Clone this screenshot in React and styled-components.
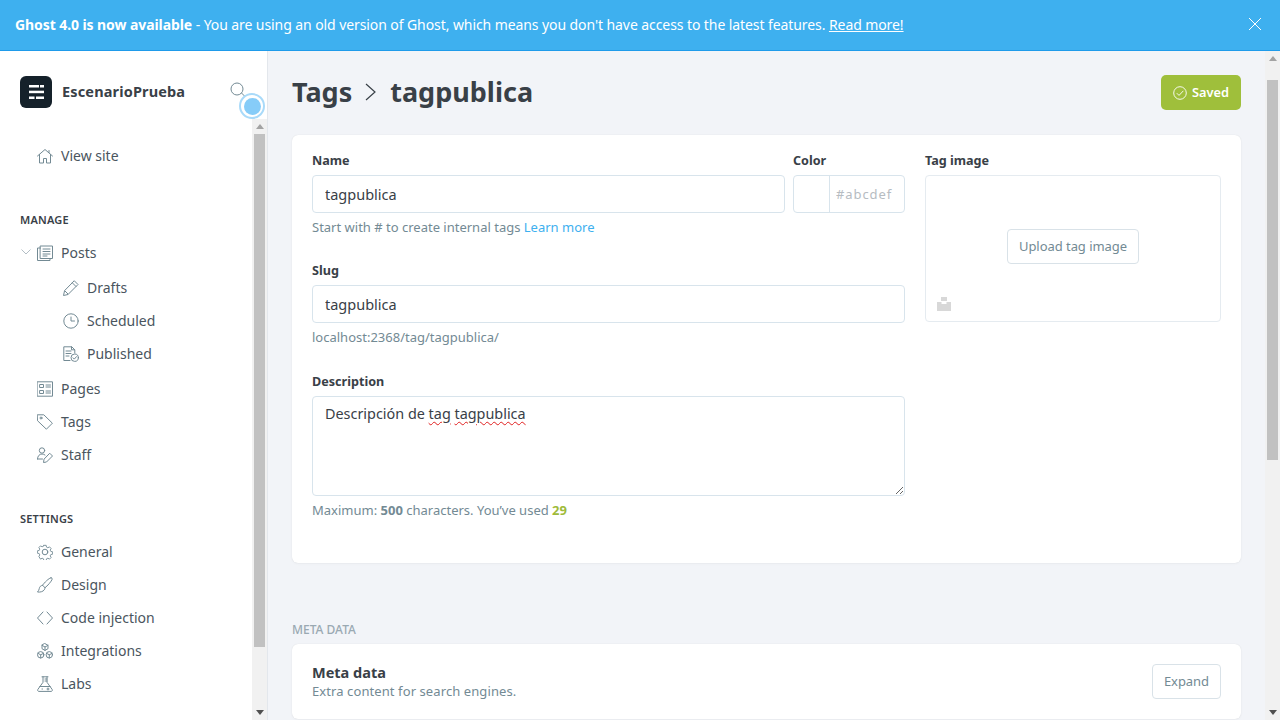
import React from 'react';
import styled, { createGlobalStyle } from 'styled-components';

const GlobalStyle = createGlobalStyle`
  html, body {
    margin: 0;
    height: 100%;
    overflow: hidden;
    font-family: "Noto Sans", "Open Sans", sans-serif;
    color: #394047;
  }
  * { box-sizing: border-box; }
`;

const Page = styled.div`
  width: 1280px;
  height: 720px;
  display: flex;
  flex-direction: column;
  background: #f2f4f8;
  overflow: hidden;
`;

const Banner = styled.div`
  height: 51px;
  flex: none;
  display: flex;
  align-items: center;
  justify-content: space-between;
  padding: 0 18px 2px 15px;
  background: #3eb0ef;
  border-bottom: 1px solid #1f9bea;
  color: #fff;
  font-size: 14px;
  letter-spacing: -0.083px;

  b { font-weight: 700; }
  a { color: #fff; text-decoration: underline; }
`;

const Body = styled.div`
  flex: 1;
  display: flex;
  min-height: 0;
`;

const Sidebar = styled.aside`
  width: 268px;
  flex: none;
  display: flex;
  flex-direction: column;
  background: #fff;
  border-right: 1px solid #e3e7ec;
`;

const SideHead = styled.div`
  position: relative;
  height: 68px;
  flex: none;
  display: flex;
  align-items: center;
  gap: 10px;
  padding: 13px 20px 0;
`;

const Logo = styled.div`
  width: 32px;
  height: 32px;
  border-radius: 6px;
  background: #15212a;
  color: #fff;
  display: flex;
  align-items: center;
  justify-content: center;
`;

const BlogName = styled.div`
  padding-bottom: 2px;
  font-size: 14.5px;
  font-weight: 700;
  color: #394047;
  letter-spacing: 0.15px;
`;

const SearchIcon = styled.svg`
  position: absolute;
  left: 228px;
  top: 30px;
`;

const Hotspot = styled.div`
  position: absolute;
  left: 239px;
  top: 42px;
  width: 26px;
  height: 26px;
  border-radius: 50%;
  border: 2px solid #a9daf9;
  display: flex;
  align-items: center;
  justify-content: center;
  background: #fff;

  &::after {
    content: '';
    width: 17px;
    height: 17px;
    border-radius: 50%;
    background: #86ccf8;
  }
`;

const SideBody = styled.div`
  flex: 1;
  min-height: 0;
  display: flex;
`;

const Nav = styled.nav`
  flex: 1;
  overflow: hidden;
  padding-top: 20px;
`;

const SectionLabel = styled.div`
  height: 16px;
  line-height: 18px;
  margin: 39px 0 9px 20px;
  font-size: 11px;
  font-weight: 600;
  letter-spacing: 0.2px;
  color: #394047;
  text-transform: uppercase;
`;

const NavRow = styled.div`
  position: relative;
  height: 33px;
  display: flex;
  align-items: center;
  gap: 8px;
  padding-left: ${({ $sub }) => ($sub ? '63px' : '37px')};
  font-size: 14px;
  color: #4a555e;

  svg { flex: none; }
`;

const Chevron = styled.svg`
  position: absolute;
  left: 21px;
  top: 12px;
`;

const SubList = styled.div`
  margin: 2px 0;
`;

const Rail = styled.div`
  width: 15px;
  flex: none;
  display: flex;
  flex-direction: column;
  align-items: center;
  background: #f1f1f1;
`;

const RailArrow = styled.div`
  height: 15px;
  flex: none;
  display: flex;
  align-items: center;
  justify-content: center;

  &::after {
    content: '';
    border-left: 4px solid transparent;
    border-right: 4px solid transparent;
    ${({ $down }) => ($down ? 'border-top: 5px solid #505050;' : 'border-bottom: 5px solid #a3a3a3;')}
  }
`;

const RailTrack = styled.div`
  flex: 1;
  width: 100%;
  padding: 0 2px;
`;

const RailThumb = styled.div`
  height: ${({ $height }) => $height}px;
  margin-top: ${({ $offset }) => $offset}px;
  background: #c1c1c1;
`;

const Main = styled.main`
  flex: 1;
  min-width: 0;
  overflow: hidden;
  padding: 24px 24px 0;
`;

const Header = styled.header`
  height: 35px;
  display: flex;
  align-items: center;
  justify-content: space-between;
  margin-bottom: 25px;
`;

const Title = styled.h1`
  margin: 0;
  padding-bottom: 2px;
  display: flex;
  align-items: center;
  gap: 12px;
  font-size: 27px;
  font-weight: 700;
  color: #394047;
`;

const SavedButton = styled.button`
  width: 80px;
  height: 35px;
  display: flex;
  align-items: center;
  justify-content: center;
  gap: 5px;
  padding: 0 0 2px;
  border: 0;
  border-radius: 5px;
  background: #9fbf3b;
  color: #fff;
  font: 600 12.8px "Noto Sans", sans-serif;

  svg { margin-top: 2px; }
`;

const Card = styled.section`
  background: #fff;
  border-radius: 6px;
  box-shadow: 0 0 1px rgba(0, 0, 0, 0.12), 0 1px 3px rgba(0, 0, 0, 0.03);
`;

const TagCard = styled(Card)`
  height: 428px;
  padding: 17px 20px 0;
  display: grid;
  grid-template-columns: 593px 296px;
  column-gap: 20px;
  align-items: start;
`;

const NameRow = styled.div`
  display: grid;
  grid-template-columns: 473px 112px;
  column-gap: 8px;
`;

const Field = styled.div`
  margin-bottom: ${({ $gap }) => $gap ?? 28}px;
`;

const Label = styled.label`
  display: block;
  height: 16px;
  line-height: 18px;
  margin-bottom: 7px;
  font-size: 12.6px;
  font-weight: 700;
  color: #394047;
`;

const Input = styled.input`
  display: block;
  width: 100%;
  height: 38px;
  padding: 0 12px;
  border: 1px solid #d8e4ec;
  border-radius: 4px;
  background: #fff;
  outline: 0;
  font: 14.5px "Noto Sans", sans-serif;
  color: #394047;
`;

const ColorBox = styled.div`
  height: 38px;
  display: flex;
  border: 1px solid #d8e4ec;
  border-radius: 4px;
`;

const Swatch = styled.div`
  width: 36px;
  flex: none;
  border-right: 1px solid #d8e4ec;
`;

const ColorInput = styled.input`
  width: 74px;
  border: 0;
  outline: 0;
  background: transparent;
  padding: 0 0 0 6px;
  font: 13px "Noto Sans", sans-serif;
  letter-spacing: 0.9px;

  &::placeholder { color: #b6bcc2; opacity: 1; }
`;

const TextArea = styled.div`
  height: 100px;
  padding: 7px 12px;
  border: 1px solid #d8e4ec;
  border-radius: 4px;
  font-size: 14.4px;
  line-height: 20px;
  color: #394047;
  overflow: hidden;
  resize: vertical;
`;

const Misspelled = styled.span`
  text-decoration: underline wavy #e02020 1px;
  text-underline-offset: 2px;
`;

const Hint = styled.p`
  height: 14px;
  line-height: 14px;
  margin: 7px 0 0;
  font-size: 13px;
  color: #738a94;

  a { color: #3eb0ef; }
  b { font-weight: 700; }
  em { font-style: normal; font-weight: 700; color: #9fbb3a; }
`;

const ImageBox = styled.div`
  position: relative;
  height: 147px;
  display: flex;
  align-items: center;
  justify-content: center;
  padding-bottom: 4px;
  border: 1px solid #e5ebf0;
  border-radius: 4px;
`;

const PlainButton = styled.button`
  height: 35px;
  padding: 0 11px 2px;
  border: 1px solid #d9e2e8;
  border-radius: 4px;
  background: #fff;
  color: #738a94;
  font: 13px "Noto Sans", sans-serif;
  letter-spacing: -0.05px;
`;

const ImageMark = styled.svg`
  position: absolute;
  left: 11px;
  bottom: 10px;
`;

const SectionTitle = styled.div`
  height: 14px;
  line-height: 15px;
  margin: 59px 0 8px;
  font-size: 12px;
  font-weight: 500;
  color: #9aa9b2;
  text-transform: uppercase;
`;

const MetaCard = styled(Card)`
  height: 75px;
  display: flex;
  align-items: flex-start;
  justify-content: space-between;
  padding: 20px;
`;

const MetaTitle = styled.div`
  height: 18px;
  line-height: 16px;
  font-size: 14.5px;
  font-weight: 700;
  color: #394047;
`;

const MetaText = styled.div`
  margin-top: 1px;
  font-size: 13px;
  line-height: 17px;
  letter-spacing: 0.09px;
  color: #738a94;
`;

const Ico = ({ children, size = 16 }) => (
  <svg width={size} height={size} viewBox="0 0 16 16" fill="none" stroke="#738a94" strokeWidth="1" strokeLinecap="round" strokeLinejoin="round">
    {children}
  </svg>
);

const HomeIcon = () => (
  <Ico>
    <path d="M0.5 8 8 1.5 15.5 8M2.5 6.500V15h4v-4.500h3V15h4V6.500M12 2.500v2" />
  </Ico>
);
const PostsIcon = () => (
  <Ico>
    <path d="M3.500 1h12v12.500h-12zM3.500 3H.5v12.500H13v-2M6 4h7M6 6.500h7M6 9h7M6 11h4" />
  </Ico>
);
const PencilIcon = () => (
  <Ico>
    <path d="M11.500 1 15 4.500 5 14.500l-4.500 1 1-4.500zM9.500 3l3.500 3.500M2 11l3 3" />
  </Ico>
);
const ClockIcon = () => (
  <Ico>
    <circle cx="8" cy="8" r="7.200" />
    <path d="M8 4v4h3.500" />
  </Ico>
);
const PublishedIcon = () => (
  <Ico>
    <path d="M7 14.500H.8V.8h8l3 3V7M8.500.8v3h3M3 5h5M3 7.500h5M3 10h3" />
    <circle cx="11.700" cy="11.700" r="3.700" />
    <path d="m10 11.800 1.300 1.300 2.200-2.500" />
  </Ico>
);
const PagesIcon = () => (
  <Ico>
    <path d="M.5.8h15v14.400H.5zM3 3.500h3.500v3H3zM3 9.500h3.500v3H3zM9 4h4.500M9 6h4.500M9 10h4.500M9 12h4.500" />
  </Ico>
);
const TagIcon = () => (
  <Ico>
    <path d="M.6.8h6.200l8.600 8.400-6 6L.8 7z" />
    <circle cx="4" cy="4" r="1" />
  </Ico>
);
const StaffIcon = () => (
  <Ico>
    <circle cx="5" cy="3.500" r="2.700" />
    <path d="M.5 12c0-3 2-5 4.500-5 1.200 0 2.200.4 3 1M.5 12h5M13 6.500l2.500 2.500-6 6-3 .5.5-3z" />
  </Ico>
);
const GearIcon = () => (
  <Ico>
    <circle cx="8" cy="8" r="2.800" />
    <path d="M6.700.6h2.600l.4 2 1.500.7 1.800-1 1.800 1.800-1 1.800.7 1.500 2 .4v2.600l-2 .4-.7 1.500 1 1.800-1.800 1.800-1.800-1-1.500.7-.4 2H6.700l-.4-2-1.500-.7-1.800 1L1.200 13l1-1.800-.7-1.500-2-.4V6.700l2-.4.7-1.500-1-1.800L3 1.200l1.800 1 1.500-.7z" transform="translate(0.8 0.8) scale(0.9)" />
  </Ico>
);
const BrushIcon = () => (
  <Ico>
    <path d="M14 .8c.8 0 1.400.7 1.200 1.400-.6 2-5 7-7.200 8.500L5.600 8.300C7 6 12 .8 14 .8zM5.600 8.300c-2 .2-3 1.500-3.300 3.200-.2 1.300-.8 2.500-1.800 3.500 2.500.4 5.500-.3 6.800-2.200.5-.7.700-1.400.7-2.100" />
  </Ico>
);
const CodeIcon = () => (
  <Ico>
    <path d="M6 2 .5 8 6 14M10 2l5.500 6L10 14" />
  </Ico>
);
const IntegrationsIcon = () => (
  <Ico>
    <path d="M8 .6l3 1.700v3.400L8 7.400 5 5.700V2.300zM5 2.300l3 1.700 3-1.700M8 4v3.400" />
    <circle cx="3.700" cy="11.800" r="3.200" />
    <circle cx="12.300" cy="11.800" r="3.200" />
    <path d="M3.700 11.800v3.200M.9 10.300l2.800 1.500 2.800-1.500M12.300 11.800v3.200M9.500 10.300l2.800 1.500 2.800-1.500" />
  </Ico>
);
const LabsIcon = () => (
  <Ico>
    <path d="M5 .8h6M6 .8v5.500L.8 13.500c-.5 1 .1 1.900 1.200 1.900h12c1.100 0 1.700-.9 1.200-1.900L10 6.300V.8M8 3h2M8 5h2M2.800 10.500h10.400M5 13h.5M10 13h2M11 12v2" />
  </Ico>
);

const navTop = [
  { label: 'Drafts', Icon: PencilIcon },
  { label: 'Scheduled', Icon: ClockIcon },
  { label: 'Published', Icon: PublishedIcon },
];

const navManage = [
  { label: 'Pages', Icon: PagesIcon },
  { label: 'Tags', Icon: TagIcon },
  { label: 'Staff', Icon: StaffIcon },
];

const navSettings = [
  { label: 'General', Icon: GearIcon },
  { label: 'Design', Icon: BrushIcon },
  { label: 'Code injection', Icon: CodeIcon },
  { label: 'Integrations', Icon: IntegrationsIcon },
  { label: 'Labs', Icon: LabsIcon },
];

const Scrollbar = ({ offset, height }) => (
  <Rail>
    <RailArrow />
    <RailTrack>
      <RailThumb $offset={offset} $height={height} />
    </RailTrack>
    <RailArrow $down />
  </Rail>
);

const App = () => (
  <Page>
    <GlobalStyle />
    <Banner>
      <span>
        <b>Ghost 4.0 is now available</b> - You are using an old version of Ghost, which means you don't have access to the latest features. <a href="#more">Read more!</a>
      </span>
      <svg width="14" height="14" viewBox="0 0 14 14" stroke="#fff" strokeWidth="1">
        <path d="M1 1l12 12M13 1 1 13" />
      </svg>
    </Banner>
    <Body>
      <Sidebar>
        <SideHead>
          <Logo>
            <svg width="15" height="14" viewBox="0 0 15 14" fill="#fff">
              <rect x="0" y="0" width="10" height="2.500" />
              <rect x="11" y="0" width="4" height="2.500" />
              <rect x="0" y="5.700" width="15" height="2.500" />
              <rect x="0" y="11.500" width="5.500" height="2.500" />
              <rect x="7" y="11.500" width="8" height="2.500" />
            </svg>
          </Logo>
          <BlogName>EscenarioPrueba</BlogName>
          <SearchIcon width="20" height="20" viewBox="0 0 20 20" fill="none" stroke="#738a94" strokeWidth="1">
            <circle cx="9" cy="8" r="6" />
            <path d="m13.500 12 4 4" />
          </SearchIcon>
          <Hotspot />
        </SideHead>
        <SideBody>
          <Nav>
            <NavRow><HomeIcon />View site</NavRow>
            <SectionLabel>Manage</SectionLabel>
            <NavRow>
              <Chevron width="10" height="8" viewBox="0 0 10 8" fill="none" stroke="#b3bec5" strokeWidth="1">
                <path d="M.5 1.500 5 6l4.500-4.500" />
              </Chevron>
              <PostsIcon />Posts
            </NavRow>
            <SubList>
              {navTop.map(({ label, Icon }) => (
                <NavRow $sub key={label}><Icon />{label}</NavRow>
              ))}
            </SubList>
            {navManage.map(({ label, Icon }) => (
              <NavRow key={label}><Icon />{label}</NavRow>
            ))}
            <SectionLabel>Settings</SectionLabel>
            {navSettings.map(({ label, Icon }) => (
              <NavRow key={label}><Icon />{label}</NavRow>
            ))}
          </Nav>
          <Scrollbar offset={0} height={513} />
        </SideBody>
      </Sidebar>
      <Main>
        <Header>
          <Title>
            Tags
            <svg width="14" height="18" viewBox="0 0 14 18" fill="none" stroke="#394047" strokeWidth="1.200">
              <path d="m2 1 9 8-9 8" />
            </svg>
            tagpublica
          </Title>
          <SavedButton>
            <svg width="14" height="14" viewBox="0 0 14 14" fill="none" stroke="#fff" strokeWidth="0.900">
              <circle cx="7" cy="7" r="6.300" />
              <path d="m3.800 7.200 2.200 2.200 4.400-4.600" />
            </svg>
            Saved
          </SavedButton>
        </Header>
        <TagCard>
          <div>
            <NameRow>
              <Field>
                <Label>Name</Label>
                <Input readOnly value="tagpublica" />
                <Hint>Start with # to create internal tags <a>Learn more</a></Hint>
              </Field>
              <div>
                <Label>Color</Label>
                <ColorBox>
                  <Swatch />
                  <ColorInput readOnly placeholder="#abcdef" />
                </ColorBox>
              </div>
            </NameRow>
            <Field $gap={29}>
              <Label>Slug</Label>
              <Input readOnly value="tagpublica" />
              <Hint>localhost:2368/tag/tagpublica/</Hint>
            </Field>
            <Field>
              <Label>Description</Label>
              <TextArea>
                Descripción de <Misspelled>tag</Misspelled> <Misspelled>tagpublica</Misspelled>
              </TextArea>
              <Hint>Maximum: <b>500</b> characters. You’ve used <em>29</em></Hint>
            </Field>
          </div>
          <div>
            <Label>Tag image</Label>
            <ImageBox>
              <PlainButton>Upload tag image</PlainButton>
              <ImageMark width="14" height="14" viewBox="0 0 14 14" fill="#d8d8d8">
                <rect x="4" y="0" width="6" height="4" />
                <path d="M0 5h4.500v2h5V5H14v9H0z" />
              </ImageMark>
            </ImageBox>
          </div>
        </TagCard>
        <SectionTitle>Meta data</SectionTitle>
        <MetaCard>
          <div>
            <MetaTitle>Meta data</MetaTitle>
            <MetaText>Extra content for search engines.</MetaText>
          </div>
          <PlainButton>Expand</PlainButton>
        </MetaCard>
      </Main>
      <Scrollbar offset={14} height={380} />
    </Body>
  </Page>
);

export default App;
